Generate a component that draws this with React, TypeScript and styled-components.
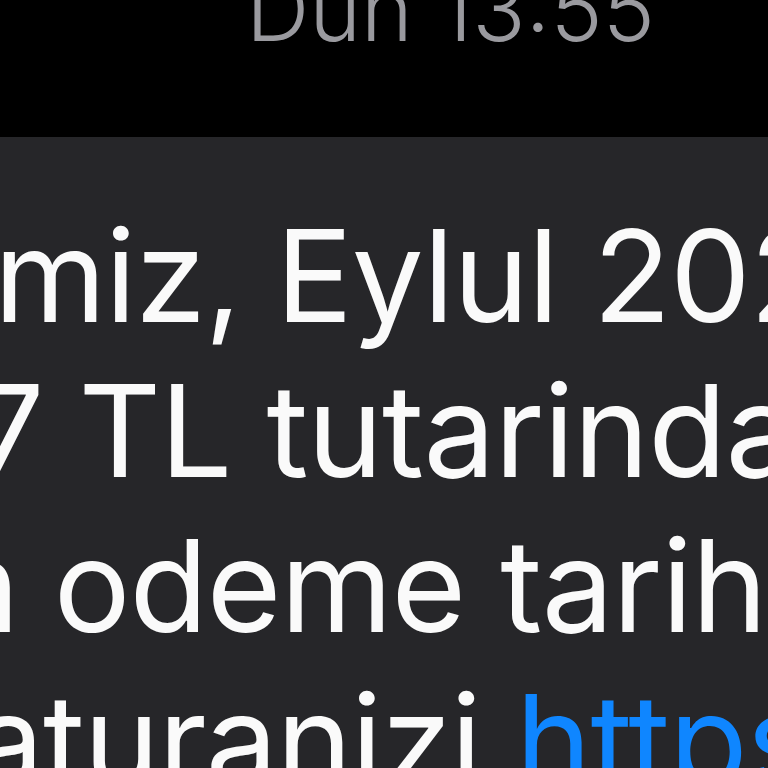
import React from 'react';
import styled, { createGlobalStyle } from 'styled-components';

const GlobalStyle = createGlobalStyle`
  html, body {
    margin: 0;
    padding: 0;
    background: #000;
  }
  body {
    width: 768px;
    height: 768px;
    overflow: hidden;
    font-family: Inter, "Noto Sans", "Liberation Sans", sans-serif;
  }
`;

const Screen = styled('div')`
  width: 768px;
  height: 768px;
  display: flex;
  flex-direction: column;
  overflow: hidden;
  background: #000;
`;

const Header = styled('div')`
  height: 137px;
  flex-shrink: 0;
  display: flex;
  align-items: flex-end;
  padding-left: 246px;
  box-sizing: border-box;
  overflow: hidden;
`;

const Timestamp = styled('span')`
  font-size: 88px;
  font-weight: 300;
  line-height: 1;
  color: #9a9a9f;
  white-space: nowrap;
  margin-bottom: 84px;
`;

const Bubble = styled('div')`
  flex: 1;
  background: #262629;
  padding-top: 61px;
  overflow: hidden;
`;

const Line = styled('div')<{ $indent: number }>`
  font-size: 128px;
  line-height: 155px;
  letter-spacing: -1px;
  color: #fafafa;
  white-space: nowrap;
  margin-left: ${(p) => p.$indent}px;
`;

const Link = styled('span')`
  color: #0f86ff;
`;

export default function App() {
  return (
    <>
      <GlobalStyle />
      <Screen>
        <Header>
          <Timestamp>Dün 13:55</Timestamp>
        </Header>
        <Bubble>
          <Line $indent={-6}>miz, Eylul 2025</Line>
          <Line $indent={-28}>7 TL tutarindaki</Line>
          <Line $indent={-56}>n odeme tarihi</Line>
          <Line $indent={-28}>aturanizi <Link>https://</Link></Line>
        </Bubble>
      </Screen>
    </>
  );
}
